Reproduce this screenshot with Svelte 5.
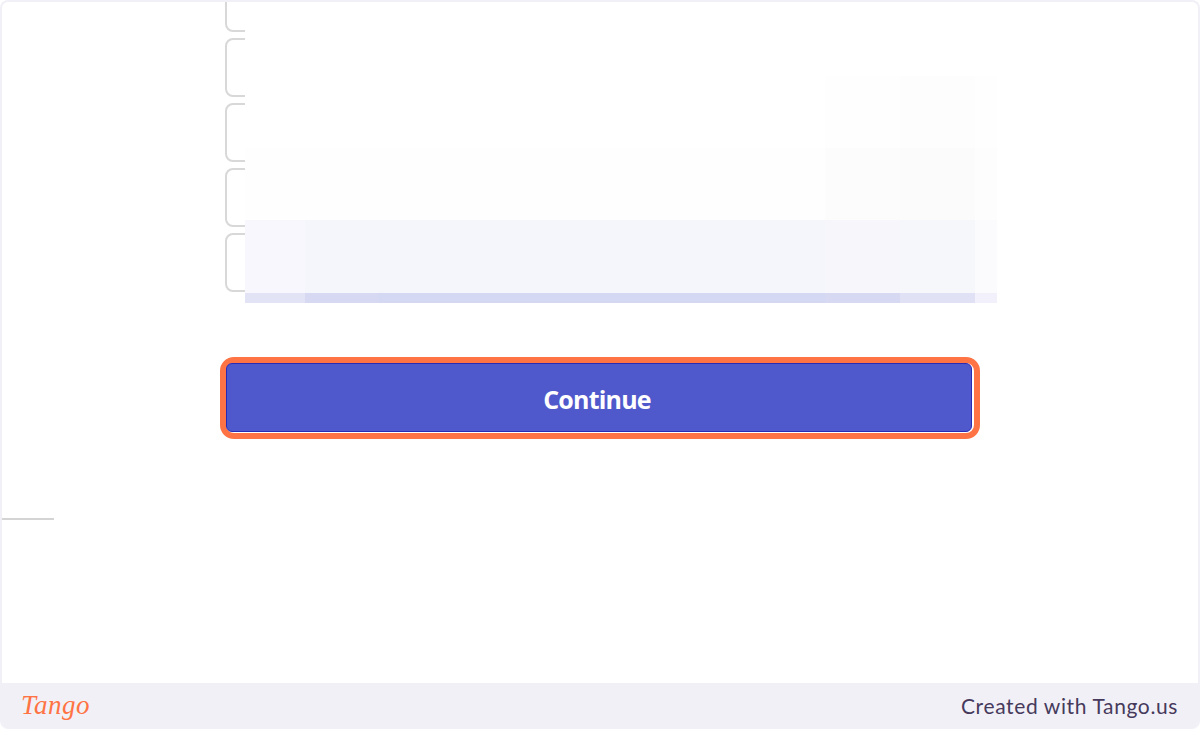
<script>
	let cards = [0, 1, 2, 3, 4]

	// blurred area, one row per band of the mosaic
	let tiles = [
		['#ffffff', '#ffffff', '#ffffff', '#ffffff', '#fefefe', '#fdfdfd', '#fefefe'],
		['#fefefe', '#fefefe', '#fefefe', '#fefefe', '#fcfcfc', '#fbfbfb', '#fcfdfc'],
		['#f7f7fd', '#f5f6fc', '#f5f6fc', '#f5f6fb', '#f6f6fb', '#f5f7fb', '#fbfbfd'],
		['#e3e3f6', '#d7d9f2', '#d5d8f2', '#d5d8f2', '#d7d9f2', '#e1e1f5', '#f2f1fb'],
	]
</script>

<div class="frame">
	<main>
		<div class="options">
			<div class="list">
				{#each cards as card}
					<div class="card"></div>
				{/each}
			</div>
			<div class="mosaic">
				{#each tiles as row}
					{#each row as color}
						<div style="background: {color}"></div>
					{/each}
				{/each}
			</div>
		</div>
		<div class="highlight">
			<button>Continue</button>
		</div>
		<div class="rule"></div>
	</main>
	<footer>
		<span class="logo">Tango</span>
		<span class="credit">Created with Tango.us</span>
	</footer>
</div>

<style>
	:global(body) {
		background: #fff;
	}

	.frame {
		box-sizing: border-box;
		height: 729px;
		display: flex;
		flex-direction: column;
		border: 2px solid #f2f0f7;
		border-bottom: 0;
		border-radius: 8px;
		overflow: hidden;
		background: #fff;
	}

	main {
		flex: 1;
	}

	.options {
		position: relative;
		height: 290px;
		width: 750px;
		margin-left: 223px;
	}

	.list {
		height: 100%;
		width: 20px;
		overflow: hidden;
		display: flex;
		flex-direction: column;
		justify-content: flex-end;
		gap: 6px;
		filter: blur(0.4px);
	}

	.card {
		flex: none;
		box-sizing: border-box;
		height: 59px;
		width: 40px;
		border: 2px solid #d8d8d8;
		border-radius: 8px;
	}

	.mosaic {
		position: absolute;
		left: 20px;
		top: 74px;
		display: grid;
		grid-template-columns: 60px 73px 372px 75px 75px 75px 22px;
		grid-template-rows: 72px 72px 73px 10px;
	}

	.highlight {
		box-sizing: border-box;
		width: 760px;
		height: 82px;
		margin: 65px 0 0 218px;
		border: 6px solid #ff7344;
		border-radius: 14px;
		padding: 0 2px 1px 0;
		background: #fff;
	}

	button {
		display: block;
		box-sizing: border-box;
		width: 100%;
		height: 100%;
		padding: 2px 4px 0 0;
		border: 1px solid #2a2ab4;
		border-radius: 6px;
		background: #5059cc;
		color: #fff;
		font-family: "Open Sans", sans-serif;
		font-size: 25px;
		font-weight: 700;
		letter-spacing: -0.8px;
	}

	.rule {
		width: 52px;
		height: 2px;
		margin-top: 79px;
		background: #d4d4d4;
	}

	footer {
		flex: none;
		box-sizing: border-box;
		height: 46px;
		display: flex;
		align-items: center;
		justify-content: space-between;
		padding: 0 20px 2px 19px;
		background: #f2f0f7;
	}

	.logo {
		font-family: "Liberation Serif", serif;
		font-style: italic;
		font-size: 27px;
		letter-spacing: 0.5px;
		color: #ff7344;
	}

	.credit {
		font-family: Lato, sans-serif;
		font-size: 21px;
		letter-spacing: 0.62px;
		color: #463a5c;
	}
</style>
